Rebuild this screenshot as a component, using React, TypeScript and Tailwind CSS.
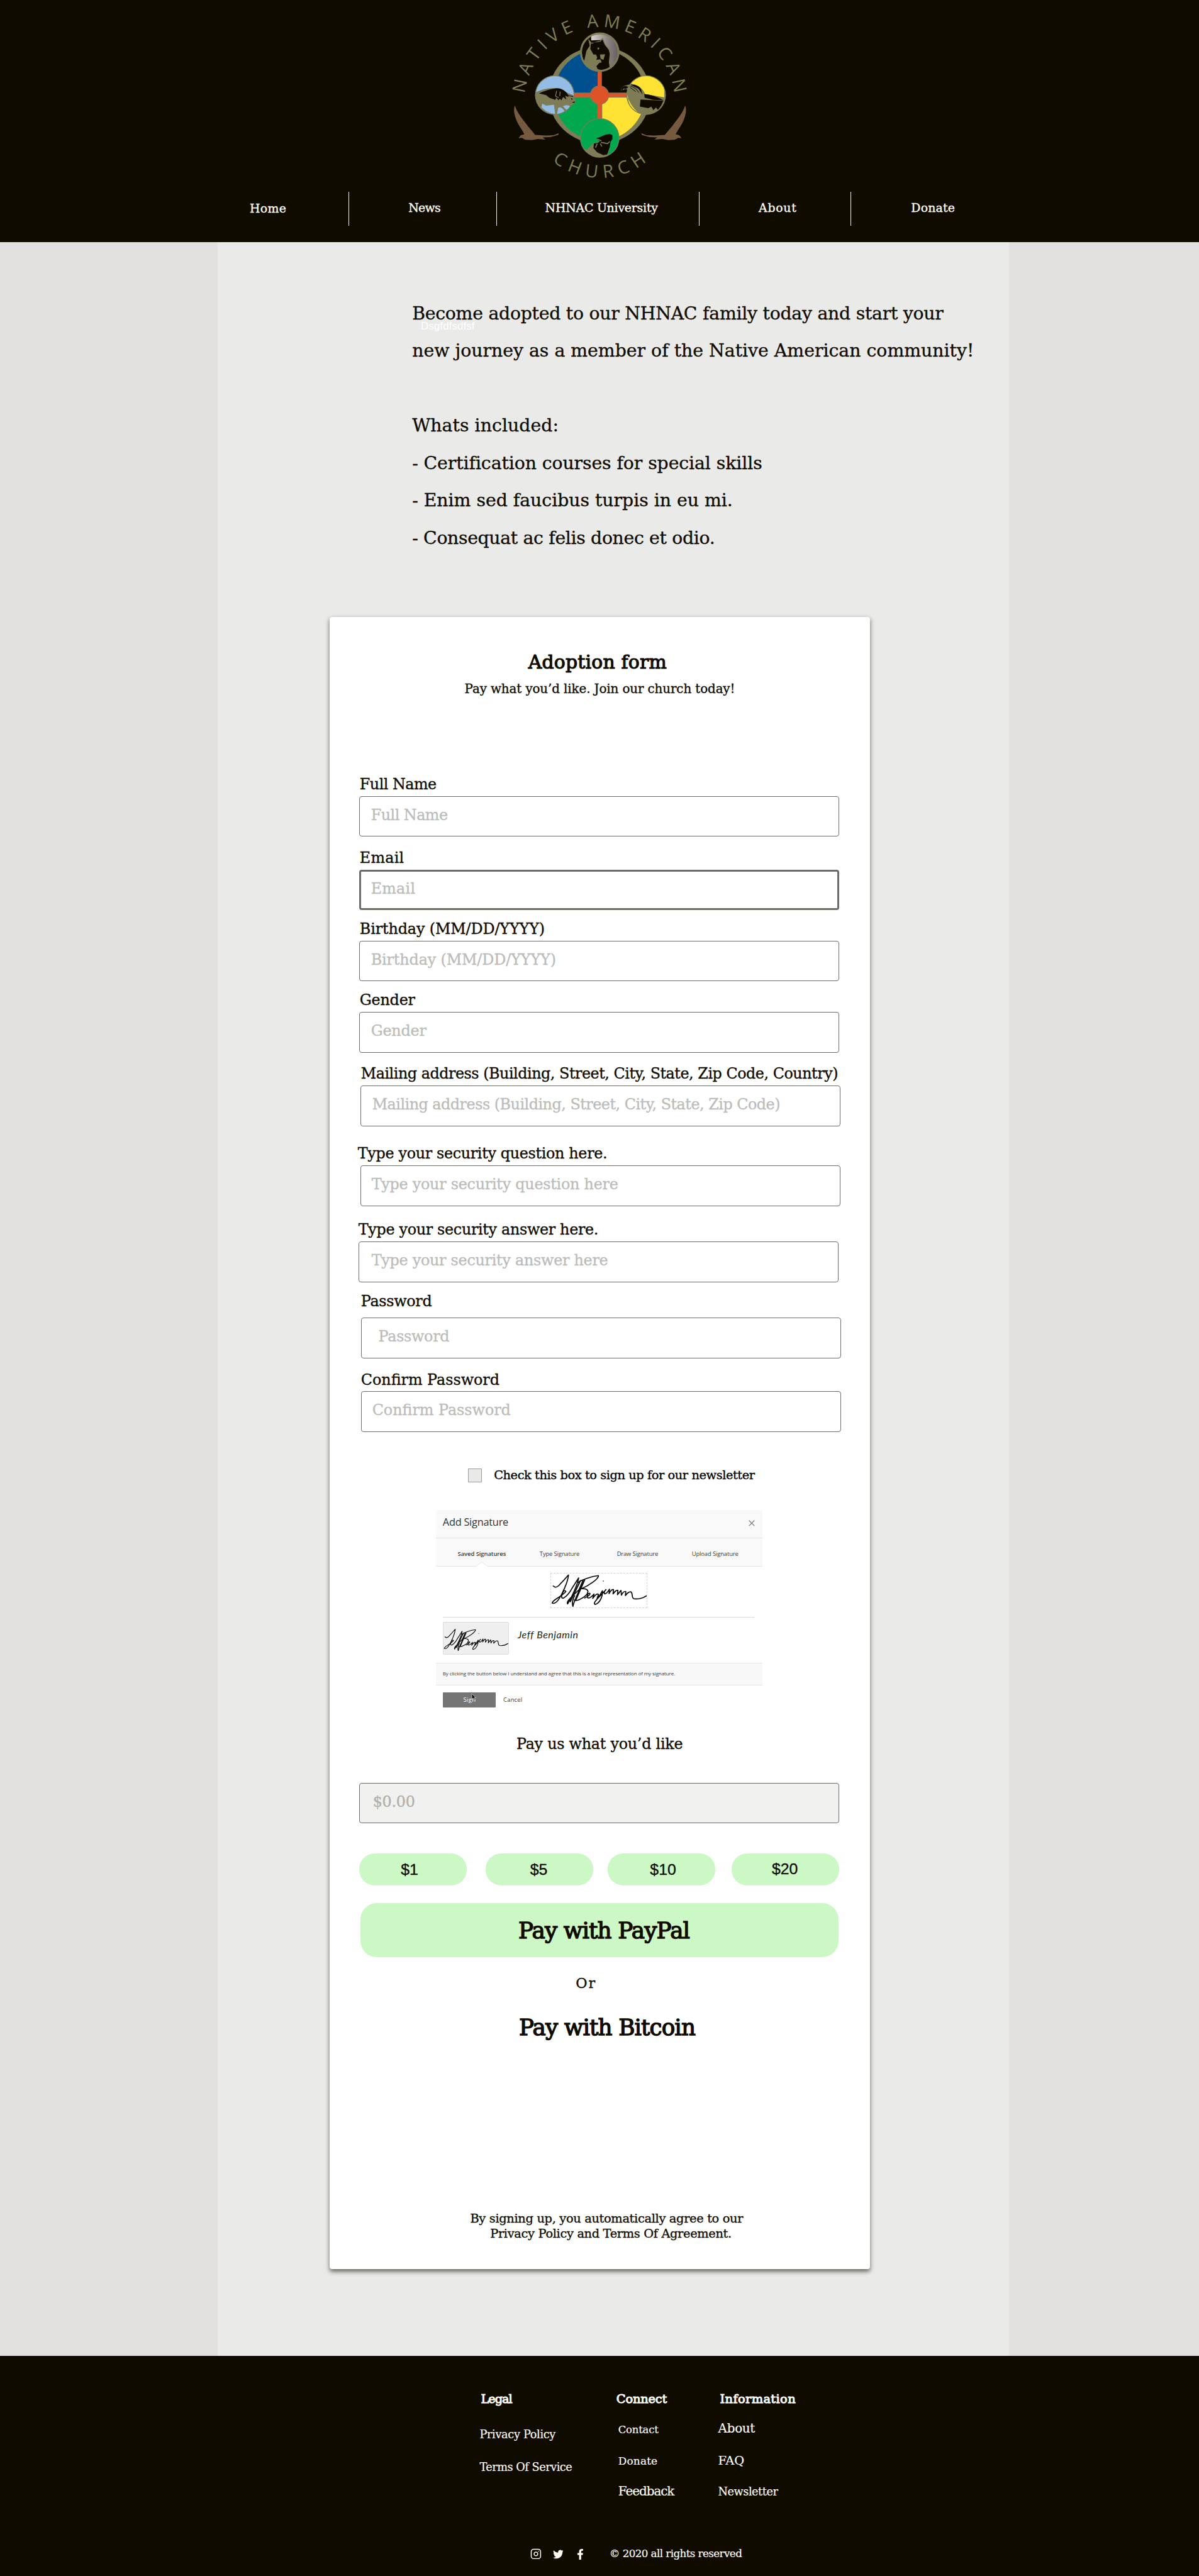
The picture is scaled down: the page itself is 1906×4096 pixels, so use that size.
import { useLayoutEffect, useRef, useState } from "react";
import { FaFacebookF, FaTwitter } from "react-icons/fa";
import { Instagram, X } from "lucide-react";

type FitProps = { w: number; className?: string; children: string };

/** One line of text whose tracking is adjusted so that it spans `w` pixels. */
function Fit({ w, className = "", children }: FitProps) {
  const ref = useRef<HTMLSpanElement>(null);
  const [tracking, setTracking] = useState(0);
  useLayoutEffect(() => {
    const el = ref.current;
    if (!el) return;
    el.style.letterSpacing = "0px";
    const next = (w - el.offsetWidth) / Math.max(1, children.length - 1);
    el.style.letterSpacing = `${next}px`;
    setTracking(next);
  }, [w, children]);
  return (
    <span
      ref={ref}
      className={`inline-block w-max whitespace-pre ${className}`}
      style={{ letterSpacing: `${tracking}px` }}
    >
      {children}
    </span>
  );
}

function Eagle() {
  return (
    <path
      d="M135 507 C142 535 165 565 185 590 C200 612 218 630 232 648 L285 651 L320 650 L345 640 L343 648 L305 659 L268 660 L282 671 L245 668 L215 673 L185 672 L168 663 L152 664 L163 650 L180 645 C165 615 140 590 132 545 C129 530 130 515 135 507Z"
      fill="#755a40"
    />
  );
}

function Logo() {
  return (
    <svg className="ml-[780px] block h-[300px] w-[360px]" viewBox="0 0 360 300">
      <defs>
        <path id="arcTop" d="M60.8 149.9 A120.5 120.5 0 0 1 300.2 149.9" />
        <path id="arcBottom" d="M104.8 258 A121 121 0 0 0 256.7 258" />
        <linearGradient id="moon" x1="0" x2="1">
          <stop offset="0" stopColor="#d6d1d2" />
          <stop offset="0.55" stopColor="#8d8585" />
          <stop offset="1" stopColor="#5f5755" />
        </linearGradient>
        <clipPath id="cTop"><circle cx="542" cy="251" r="91" /></clipPath>
        <clipPath id="cLeft"><circle cx="326" cy="457" r="91" /></clipPath>
        <clipPath id="cRight"><circle cx="765" cy="457" r="91" /></clipPath>
        <clipPath id="cBottom"><circle cx="542" cy="663" r="91" /></clipPath>
        <clipPath id="disc"><circle cx="541" cy="457" r="219" /></clipPath>
      </defs>
      <g fill="#7d7c55" fontFamily="'Open Sans','Noto Sans',sans-serif" fontSize="28.5">
        <text textLength="350">
          <textPath href="#arcTop" textLength="350">NATIVE AMERICAN</textPath>
        </text>
        <text textLength="163">
          <textPath href="#arcBottom" textLength="163">CHURCH</textPath>
        </text>
      </g>
      <g transform="scale(0.33333)">
        <ellipse cx="541" cy="457" rx="245" ry="234" fill="#7d7c55" />
        <g clipPath="url(#disc)">
          <rect x="300" y="220" width="232" height="225" fill="#00508f" />
          <rect x="552" y="220" width="240" height="225" fill="#0f0b00" />
          <rect x="300" y="469" width="230" height="230" fill="#02a84e" />
          <rect x="554" y="469" width="240" height="230" fill="#ffe332" />
        </g>
        <circle cx="541" cy="457" r="46" fill="#7d7c55" />
        <rect x="532" y="345" width="19" height="225" fill="#dc5427" />
        <rect x="420" y="449" width="250" height="17" fill="#dc5427" />
        <circle cx="542" cy="457" r="42" fill="#dc5427" />

        <circle cx="542" cy="251" r="95" fill="#7d7c55" />
        <g clipPath="url(#cTop)">
          <circle cx="542" cy="251" r="86" fill="#0f0b00" />
          <path d="M501 150 V194 L545 193 L557 185 L568 215 L585 238 L592 256 L588 300 L594 330 L625 325 L640 250 L600 150Z" fill="url(#moon)" />
          <path d="M460 210 A91 91 0 0 1 620 205" fill="none" stroke="#7d7c55" strokeWidth="7" transform="translate(0 -2)" opacity="0" />
          <circle cx="542" cy="251" r="89" fill="none" stroke="#7d7c55" strokeWidth="7" />
          <path d="M488 190 L502 208 L545 198 L556 186 L567 213 L588 240 L592 258 L588 300 L592 330" fill="none" stroke="#7d7c55" strokeWidth="4" />
          <path d="M488 192 L500 205 L497 235 L512 262 L524 262 L530 275 L526 288 L545 285 L552 300 L540 302 L526 318 L532 332 L572 344 L500 352 L440 320 L468 290 L478 245 L494 220Z" fill="#7d7c55" />
          <path d="M510 203 L545 203 L555 214 L568 222 L577 246 L558 240 L545 228 L535 240 L525 222Z M545 264 L556 262 L568 262 L562 285 L552 291 L545 282Z" fill="#0f0b00" />
          <path d="M543 262 L568 261 L560 288 L546 282Z M532 228 L540 230 L538 238 L531 237Z" fill="#7d7c55" />
        </g>

        <circle cx="326" cy="457" r="95" fill="#7d7c55" />
        <g clipPath="url(#cLeft)">
          <path d="M225 448 Q320 400 385 445 L425 462 V350 H225Z" fill="#93bde6" />
          <path d="M266 498 L285 508 L322 503 L328 548 Q290 545 262 515Z M343 517 Q360 512 373 534 L350 550 L337 546Z M365 510 Q385 500 402 512 L384 530Z" fill="#93bde6" />
        </g>
        <path d="M250 449 Q285 432 318 427 Q345 420 362 430 Q382 440 392 459 L414 462 L410 472 L392 466 L376 460 L382 478 L366 466 L358 482 L350 474 L344 482 L334 470 L328 480 L300 470 L285 457Z" fill="#0f0b00" />
        <path d="M335 436 L330 462 L345 470 M352 440 L350 462" stroke="#7d7c55" strokeWidth="4" fill="none" />
        <path d="M392 462 Q420 462 427 482 L420 500 L400 508 L385 480Z" fill="#7d7c55" />
        <path d="M403 472 L412 474 L409 481Z M408 492 L423 487 L420 495Z" fill="#0f0b00" />

        <circle cx="765" cy="457" r="95" fill="#7d7c55" />
        <g clipPath="url(#cRight)">
          <path d="M680 400 Q730 405 760 452 L852 468 V350 H680Z" fill="#ffe332" />
          <path d="M672 438 Q675 500 735 548 L710 548 L660 500Z" fill="#ffe332" />
          <path d="M676 470 Q680 515 715 535" stroke="#7d7c55" strokeWidth="4" fill="none" />
          <path d="M756 452 Q800 455 850 482 L800 480 L758 470Z M738 478 L848 484 Q838 510 822 528 L812 516 L800 530 L790 512 L775 520 L735 512Z" fill="#0f0b00" />
        </g>
        <path d="M645 437 Q642 415 668 410 Q700 400 728 413 Q752 430 760 452 L735 450 L700 440 L665 428Z" fill="#7d7c55" />
        <path d="M645 432 Q646 412 668 413 L680 418 L670 426 L655 426 L650 438Z M690 407 Q725 405 740 428 L748 455 L728 426Z" fill="#0f0b00" />
        <path d="M690 414 Q715 420 730 445 M688 420 L715 440" fill="none" stroke="#0f0b00" strokeWidth="3" />

        <circle cx="542" cy="663" r="95" fill="#7d7c55" />
        <g clipPath="url(#cBottom)">
          <path d="M440 560 H640 V700 Q620 735 580 742 L592 712 L585 680 L530 682 L510 690 L478 720 L440 700Z" fill="#02a84e" />
          <path d="M526 664 L545 658 L566 648 L590 643 L603 650 L603 668 L594 682 L590 708 L578 742 L560 746 L530 732 L512 712 L514 690 L534 686 L542 680Z" fill="#0f0b00" />
          <path d="M548 684 L580 690 L590 680 M530 690 L522 710 M545 690 L552 704 M530 668 L550 677" stroke="#7d7c55" strokeWidth="5" fill="none" />
        </g>
        <Eagle />
        <g transform="translate(1087 0) scale(-1 1)"><Eagle /></g>
      </g>
    </svg>
  );
}

function Signature({ className }: { className: string }) {
  return (
    <svg className={className} viewBox="563 360 436 168" preserveAspectRatio="none">
      <g fill="none" stroke="#0a0a0a" strokeWidth="5" strokeLinecap="round" strokeLinejoin="round">
        <path d="M573 422 Q583 434 596 422 Q620 395 642 367 C640 400 615 460 598 488 Q582 514 568 507 C568 492 605 480 630 450 Q622 436 612 466 Q608 486 620 482 Q640 470 660 430 L688 382 C682 420 655 480 638 512 Q632 500 655 478 L690 440 L708 394 C700 430 668 490 662 524 Q655 500 670 470" />
        <path d="M686 404 C700 392 745 374 778 370 C778 388 735 420 700 436 C745 432 735 465 700 485 Q675 500 668 492" />
        <path d="M696 396 L650 500 M715 392 L676 490" strokeWidth="6" />
        <path d="M715 482 Q745 466 738 458 Q725 460 728 480 Q738 488 758 462 L752 484 Q770 456 778 464 L772 484 Q785 470 796 446 C798 470 785 510 762 514 C748 506 790 470 812 440 Q800 450 806 462 Q815 462 828 438 L826 460 Q838 436 846 440 L844 462 Q858 440 866 444 L864 466 L880 444 L882 468 Q892 446 902 450 L900 470 Q915 448 926 452 C936 462 925 482 940 486 Q970 490 996 471" />
      </g>
      <circle cx="800" cy="398" r="2.5" fill="#222" />
    </svg>
  );
}

function SignaturePanel() {
  return (
    <div className="ml-[170px] mt-[44px] h-[316px] w-[523px] font-['Open_Sans',sans-serif] text-[#3a3a3a] [-webkit-text-stroke:0px]">
      <div className="flex h-[45px] justify-between border-b border-[#e4e4e4] bg-[#f9f9f9] pl-[11px] pr-[9px]">
        <Fit w={105} className="mt-[7px] text-[16.500px] leading-[26px] text-[#333]">Add Signature</Fit>
        <X className="mt-[13px] size-[16px] text-[#777]" strokeWidth={1.8} />
      </div>
      <div className="relative flex h-[46px] border-b border-[#e4e4e4] bg-[#f9f9f9] pl-[35px] pt-[18px] text-[9.500px] leading-[14px]">
        <Fit w={77} className="mr-[54px] font-semibold">Saved Signatures</Fit>
        <Fit w={64} className="mr-[60px]">Type Signature</Fit>
        <Fit w={66} className="mr-[54px]">Draw Signature</Fit>
        <Fit w={75}>Upload Signature</Fit>
        <svg className="absolute left-[63px] top-[38px] h-[9px] w-[22px]" viewBox="0 0 22 9">
          <path d="M1 8 L11 1 L21 8" fill="#fff" stroke="#e4e4e4" />
          <path d="M1.500 9 L11 2 L20.500 9Z" fill="#fff" />
        </svg>
      </div>
      <div className="ml-[183px] mt-[10px] h-[56px] w-[156px] border border-dashed border-[#d4d4d4]">
        <Signature className="h-full w-full" />
      </div>
      <div className="ml-[11px] mt-[14px] h-px w-[499px] bg-[#dcdcdc]" />
      <div className="ml-[11px] mt-[7px] flex h-[53px]">
        <div className="w-[106px] rounded-[2px] border border-[#dcdcdc] bg-[#efefef] pt-[9px]">
          <Signature className="h-[37px] w-[104px]" />
        </div>
        <Fit w={96} className="ml-[14px] mt-[10px] font-['Lato',cursive] text-[16px] italic leading-[20px] text-[#222]">Jeff Benjamin</Fit>
      </div>
      <div className="mt-[13px] flex h-[36px] items-start border-y border-[#e6e6e6] bg-[#f8f8f8] pl-[11px] pt-[11px] text-[8px] leading-[12px]">
        <Fit w={372}>By clicking the button below I understand and agree that this is a legal representation of my signature.</Fit>
      </div>
      <div className="ml-[11px] mt-[11px] flex h-[24px] text-[9.500px] leading-[24px]">
        <div className="relative w-[85px] rounded-[1px] bg-[#757575] pl-[33px] text-white">
          <Fit w={20}>Sign</Fit>
          <svg className="absolute left-[46px] top-[1px] h-[13px] w-[8px]" viewBox="0 0 8 13">
            <path d="M1 1 V10 L3 8 L4.500 12 L6 11.500 L4.800 7.800 L7.500 7.500Z" fill="#111" stroke="#ddd" strokeWidth="0.7" />
          </svg>
        </div>
        <Fit w={30} className="ml-[12px]">Cancel</Fit>
      </div>
    </div>
  );
}

type FieldProps = {
  label: string;
  labelWidth: number;
  placeholder: string;
  placeholderWidth: number;
  className: string;
  labelClass?: string;
  boxClass?: string;
};

function Field({
  label,
  labelWidth,
  placeholder,
  placeholderWidth,
  className,
  labelClass = "h-[33px] pl-px",
  boxClass = "border border-[#6d6c68] pl-[18px] pt-[15px]",
}: FieldProps) {
  return (
    <div className={`flex w-[769px] flex-col items-start text-[24px] leading-[30px] ${className}`}>
      <div className={`flex ${labelClass}`}>
        <Fit w={labelWidth}>{label}</Fit>
      </div>
      <div className={`flex h-[65px] w-[769px] items-start rounded-[4px] text-[#bcbcba] ${boxClass}`}>
        <Fit w={placeholderWidth}>{placeholder}</Fit>
      </div>
    </div>
  );
}

function Header() {
  return (
    <header className="h-[388px] bg-[#0f0b00] text-[#fffdf2]">
      <Logo />
      <nav className="mt-[7px] flex h-[55px] pl-[400px] text-[19px] leading-[30px]">
        <div className="w-[159px] border-r border-[#f5f3ea] pt-[12px]"><Fit w={58}>Home</Fit></div>
        <div className="w-[237px] border-r border-[#f5f3ea] pl-[95px] pt-[11px]"><Fit w={52}>News</Fit></div>
        <div className="w-[324px] border-r border-[#f5f3ea] pl-[77px] pt-[11px]"><Fit w={181}>NHNAC University</Fit></div>
        <div className="w-[243px] border-r border-[#f5f3ea] pl-[95px] pt-[11px]"><Fit w={60}>About</Fit></div>
        <div className="pl-[96px] pt-[11px]"><Fit w={70}>Donate</Fit></div>
      </nav>
    </header>
  );
}

function Intro() {
  return (
    <section className="relative flex flex-col items-start pl-[311px] text-[28.500px] leading-[60px]">
      <span className="absolute left-[325px] top-[39px] font-['Liberation_Sans',sans-serif] text-[17px] leading-[24px] text-white [-webkit-text-stroke:0px]">
        <Fit w={86}>Dsgfdfsdfsf</Fit>
      </span>
      <Fit w={851} className="relative">Become adopted to our NHNAC family today and start your</Fit>
      <Fit w={900}>new journey as a member of the Native American community!</Fit>
      <Fit w={235} className="mt-[60px]">Whats included:</Fit>
      <Fit w={560}>- Certification courses for special skills</Fit>
      <Fit w={513}>- Enim sed faucibus turpis in eu mi.</Fit>
      <Fit w={485}>- Consequat ac felis donec et odio.</Fit>
    </section>
  );
}

function Amounts() {
  return (
    <div className="ml-[47px] mt-[48px] flex h-[51px] font-['Liberation_Sans',sans-serif] text-[25px] leading-[53px]">
      <div className="w-[172px] rounded-[25px] bg-[#ccf8c6] pl-[67px]">$1</div>
      <div className="ml-[31px] w-[172px] rounded-[25px] bg-[#ccf8c6] pl-[71px]">$5</div>
      <div className="ml-[23px] w-[172px] rounded-[25px] bg-[#ccf8c6] pl-[68px]">$10</div>
      <div className="ml-[27px] w-[172px] rounded-[25px] bg-[#ccf8c6] pl-[64px] leading-[51px]">$20</div>
    </div>
  );
}

function AdoptionForm() {
  return (
    <form className="ml-[179px] mt-[96px] flex h-[2647px] w-[865px] flex-col items-start rounded-[4px] bg-white pt-[53px] shadow-[0_4px_8px_rgba(15,11,0,0.6)]">
      <Fit w={222} className="ml-[318px] text-[30px] leading-[41px] [-webkit-text-stroke:1.200px_#0f0b00]">Adoption form</Fit>
      <Fit w={433} className="ml-[216px] mt-[7px] text-[20px] leading-[30px]">Pay what you’d like. Join our church today!</Fit>

      <Field className="ml-[47px] mt-[123px]" label="Full Name" labelWidth={123} placeholder="Full Name" placeholderWidth={123} />
      <Field className="ml-[47px] mt-[20px]" label="Email" labelWidth={71} placeholder="Email" placeholderWidth={71} boxClass="border-[3.100px] border-[#706c65] pl-[16px] pt-[13px]" />
      <Field className="ml-[47px] mt-[16px]" label="Birthday (MM/DD/YYYY)" labelWidth={297} placeholder="Birthday (MM/DD/YYYY)" placeholderWidth={297} />
      <Field className="ml-[47px] mt-[16px]" label="Gender" labelWidth={89} placeholder="Gender" placeholderWidth={89} />
      <Field className="ml-[49px] mt-[20px]" label="Mailing address (Building, Street, City, State, Zip Code, Country)" labelWidth={764} placeholder="Mailing address (Building, Street, City, State, Zip Code)" placeholderWidth={654} />
      <Field className="ml-[49px] mt-[30px]" label="Type your security question here." labelWidth={400} placeholder="Type your security question here" placeholderWidth={395} labelClass="h-[33px] -ml-[4px]" boxClass="border border-[#6d6c68] pl-[17px] pt-[15px]" />
      <Field className="ml-[46px] mt-[24px]" label="Type your security answer here." labelWidth={384} placeholder="Type your security answer here" placeholderWidth={379} labelClass="h-[33px]" boxClass="border border-[#6d6c68] pl-[20px] pt-[15px]" />
      <Field className="ml-[50px] mt-[16px]" label="Password" labelWidth={114} placeholder="Password" placeholderWidth={114} labelClass="h-[41px]" boxClass="border border-[#6d6c68] pl-[27px] pt-[15px]" />
      <Field className="ml-[50px] mt-[20px]" label="Confirm Password" labelWidth={222} placeholder="Confirm Password" placeholderWidth={222} labelClass="h-[33px]" boxClass="border border-[#6d6c68] pl-[17px] pt-[15px]" />

      <div className="ml-[221px] mt-[58px] flex h-[23px] text-[19.500px] leading-[23px] text-black">
        <div className="w-[23px] border border-[#9c9c9a] bg-[#e9e9e8]" />
        <Fit w={418} className="ml-[19px]">Check this box to sign up for our newsletter</Fit>
      </div>

      <SignaturePanel />

      <Fit w={267} className="ml-[299px] mt-[44px] text-[24px] leading-[31px]">Pay us what you’d like</Fit>
      <div className="ml-[47px] mt-[46px] flex h-[65px] w-[769px] items-start rounded-[4px] border border-[#6d6c68] bg-[#f1f1ef] pl-[21px] pt-[15px] text-[24px] leading-[29px] text-[#b0b0ad]">
        <Fit w={68}>$0.00</Fit>
      </div>
      <Amounts />
      <div className="ml-[49px] mt-[29px] flex h-[86px] w-[766px] rounded-[26px] bg-[#ccf8c6] pl-[253px] text-[36px] leading-[88px]">
        <Fit w={275} className="[-webkit-text-stroke:1.400px_#0f0b00]">Pay with PayPal</Fit>
      </div>
      <Fit w={31} className="ml-[394px] mt-[27px] text-[22.500px] leading-[30px]">Or</Fit>
      <Fit w={283} className="ml-[303px] mt-[33px] text-[36px] leading-[47px] [-webkit-text-stroke:1.400px_#0f0b00]">Pay with Bitcoin</Fit>
      <Fit w={437} className="ml-[225px] mt-[270px] text-[19.500px] leading-[24px]">By signing up, you automatically agree to our</Fit>
      <Fit w={387} className="ml-[257px] text-[19.500px] leading-[24px]">Privacy Policy and Terms Of Agreement.</Fit>
    </form>
  );
}

function Footer() {
  return (
    <footer className="h-[352px] bg-[#0f0b00] pl-[768px] pt-[56px] leading-[27px] text-[#fffdf2] [-webkit-text-stroke:0.200px]">
      <div className="flex h-[248px]">
        <div className="flex w-[218px] flex-col items-start text-[17.800px]">
          <Fit w={51} className="ml-[2px] text-[19.500px] [-webkit-text-stroke:1px_#fffdf2]">Legal</Fit>
          <Fit w={122} className="mt-[29px]">Privacy Policy</Fit>
          <Fit w={148} className="mt-[26px]">Terms Of Service</Fit>
        </div>
        <div className="flex w-[164px] flex-col items-start pl-[4px]">
          <Fit w={81} className="-ml-[3px] text-[19.500px] [-webkit-text-stroke:1px_#fffdf2]">Connect</Fit>
          <Fit w={64} className="mt-[22px] text-[16.500px]">Contact</Fit>
          <Fit w={63} className="mt-[23px] text-[17px]">Donate</Fit>
          <Fit w={90} className="mt-[22px] text-[20px]">Feedback</Fit>
        </div>
        <div className="flex flex-col items-start">
          <Fit w={121} className="ml-[3px] text-[19.500px] [-webkit-text-stroke:1px_#fffdf2]">Information</Fit>
          <Fit w={59} className="mt-[20px] text-[20px]">About</Fit>
          <Fit w={42} className="mt-[25px] text-[19.500px]">FAQ</Fit>
          <Fit w={96} className="mt-[22px] text-[17.800px]">Newsletter</Fit>
        </div>
      </div>
      <div className="flex h-[26px] items-center pl-[81px]">
        <Instagram className="size-[18px]" strokeWidth={2} />
        <FaTwitter className="ml-[18px] size-[17px]" />
        <FaFacebookF className="ml-[19px] size-[17px]" />
        <Fit w={212} className="ml-[38px] text-[16.800px]">© 2020 all rights reserved</Fit>
      </div>
    </footer>
  );
}

export default function App() {
  return (
    <div className="h-[4126px] w-full bg-[#e2e1df] font-['DejaVu_Serif',serif] text-[#0f0b00] [-webkit-text-stroke:0.350px] [zoom:0.9927]">
      <Header />
      <main className="ml-[349px] h-[3386px] w-[1267px] bg-[#eaeae8] pt-[84px]">
        <Intro />
        <AdoptionForm />
      </main>
      <Footer />
    </div>
  );
}
